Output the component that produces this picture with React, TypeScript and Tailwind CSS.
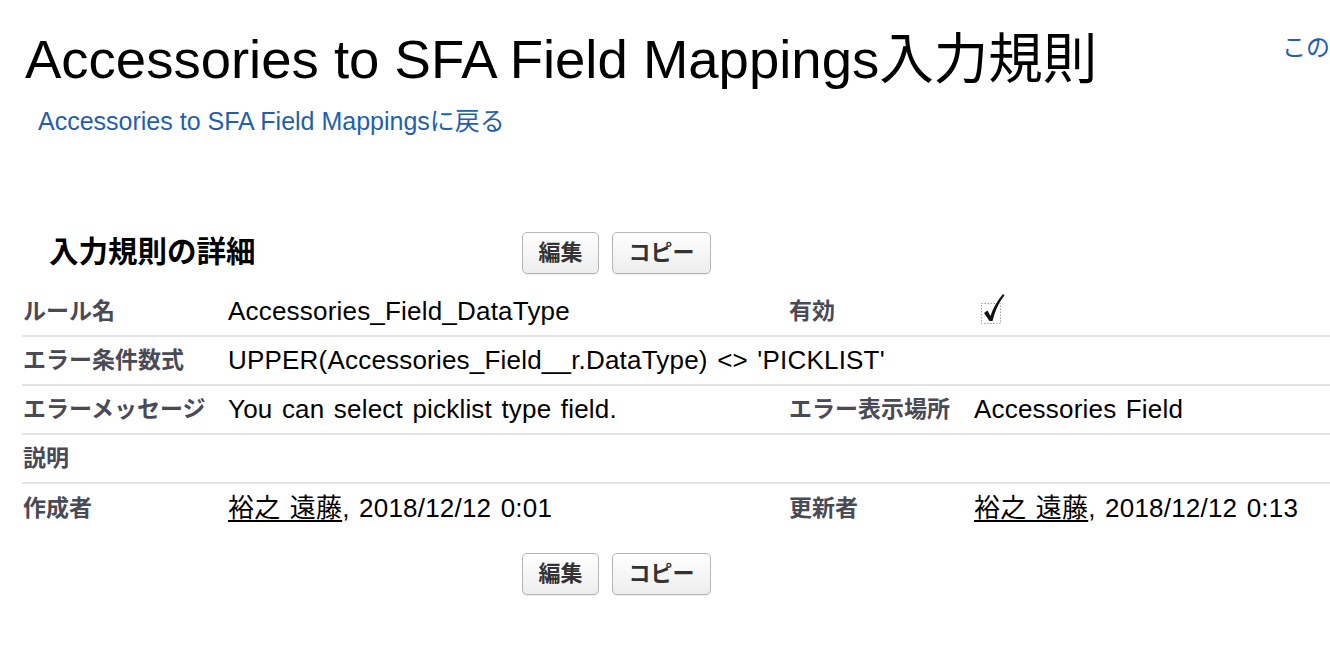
import React from 'react';

const font = { fontFamily: '"Liberation Sans", "Noto Sans CJK JP", sans-serif' };

const Btn = ({ label, w }: { label: string; w: string }) => (
  <button
    className={`${w} h-[42px] rounded-[5px] border border-[#b5b5b5] bg-gradient-to-b from-white to-[#ededed] text-[22px] font-bold text-[#333] shadow-[0_1px_0_rgba(0,0,0,0.08)]`}
  >
    {label}
  </button>
);

const Buttons = () => (
  <div className="flex gap-[13px]">
    <Btn label="編集" w="w-[77px]" />
    <Btn label="コピー" w="w-[99px]" />
  </div>
);

const Check = () => (
  <svg width="32" height="34" viewBox="0 0 32 34" className="-mt-[6px] ml-[1px]">
    <rect x="6.5" y="12.5" width="19" height="20" fill="none" stroke="#a0a0a0" strokeWidth="1" strokeDasharray="1.5 1.5" />
    <path d="M9 22 L12.5 19.5 L15.5 25 C18 17 22 10 28 3 L29.5 4.5 C24 11 20.5 19 17.5 30 L14.5 30 Z" fill="#111" />
  </svg>
);

const Label = ({ children }: { children?: React.ReactNode }) => (
  <div className="text-[23px] font-bold text-[#4a4a56] whitespace-nowrap">{children}</div>
);

const Value = ({ children }: { children?: React.ReactNode }) => (
  <div className="text-[26px] text-black whitespace-nowrap tracking-[0.2px] [word-spacing:2px]">{children}</div>
);

const User = () => <span className="underline underline-offset-[3px]">裕之 遠藤</span>;

const Row = ({
  l1,
  v1,
  l2,
  v2,
  last,
}: {
  l1: string;
  v1?: React.ReactNode;
  l2?: string;
  v2?: React.ReactNode;
  last?: boolean;
}) => (
  <div
    className={`grid grid-cols-[206px_561px_185px_1fr] items-center h-[49px] ${
      last ? '' : 'border-b-2 border-[#e3e3e3]'
    }`}
  >
    <div className="pl-[1px]">
      <Label>{l1}</Label>
    </div>
    <Value>{v1}</Value>
    <Label>{l2}</Label>
    <Value>{v2}</Value>
  </div>
);

export default function App() {
  return (
    <div className="w-[1330px] h-[650px] overflow-hidden bg-white" style={font}>
      <div className="flex w-[1600px] pl-[25px] pt-[28px]">
        <h1 className="w-[1257px] shrink-0 text-[54.5px] leading-[64px] font-normal text-black">
          Accessories to SFA Field Mappings入力規則
        </h1>
        <a className="mt-[2px] text-[24px] text-[#1f5fae] whitespace-nowrap">このページのヘルプ</a>
      </div>
      <div className="pl-[38px] mt-[11px]">
        <a className="text-[25px] text-[#1f5fae]">Accessories to SFA Field Mappingsに戻る</a>
      </div>

      <div className="mt-[90px] pl-[22px] w-[1400px]">
        <div className="flex items-center h-[44px] mb-[13px]">
          <h2 className="w-[500px] pl-[27px] text-[29.5px] font-bold text-black">入力規則の詳細</h2>
          <Buttons />
        </div>
        <Row l1="ルール名" v1="Accessories_Field_DataType" l2="有効" v2={<Check />} />
        <Row l1="エラー条件数式" v1="UPPER(Accessories_Field__r.DataType) <> 'PICKLIST'" />
        <Row
          l1="エラーメッセージ"
          v1="You can select picklist type field."
          l2="エラー表示場所"
          v2="Accessories Field"
        />
        <Row l1="説明" />
        <Row
          l1="作成者"
          v1={
            <>
              <User />, 2018/12/12 0:01
            </>
          }
          l2="更新者"
          v2={
            <>
              <User />, 2018/12/12 0:13
            </>
          }
          last
        />
        <div className="pl-[500px] mt-[20px]">
          <Buttons />
        </div>
      </div>
    </div>
  );
}
